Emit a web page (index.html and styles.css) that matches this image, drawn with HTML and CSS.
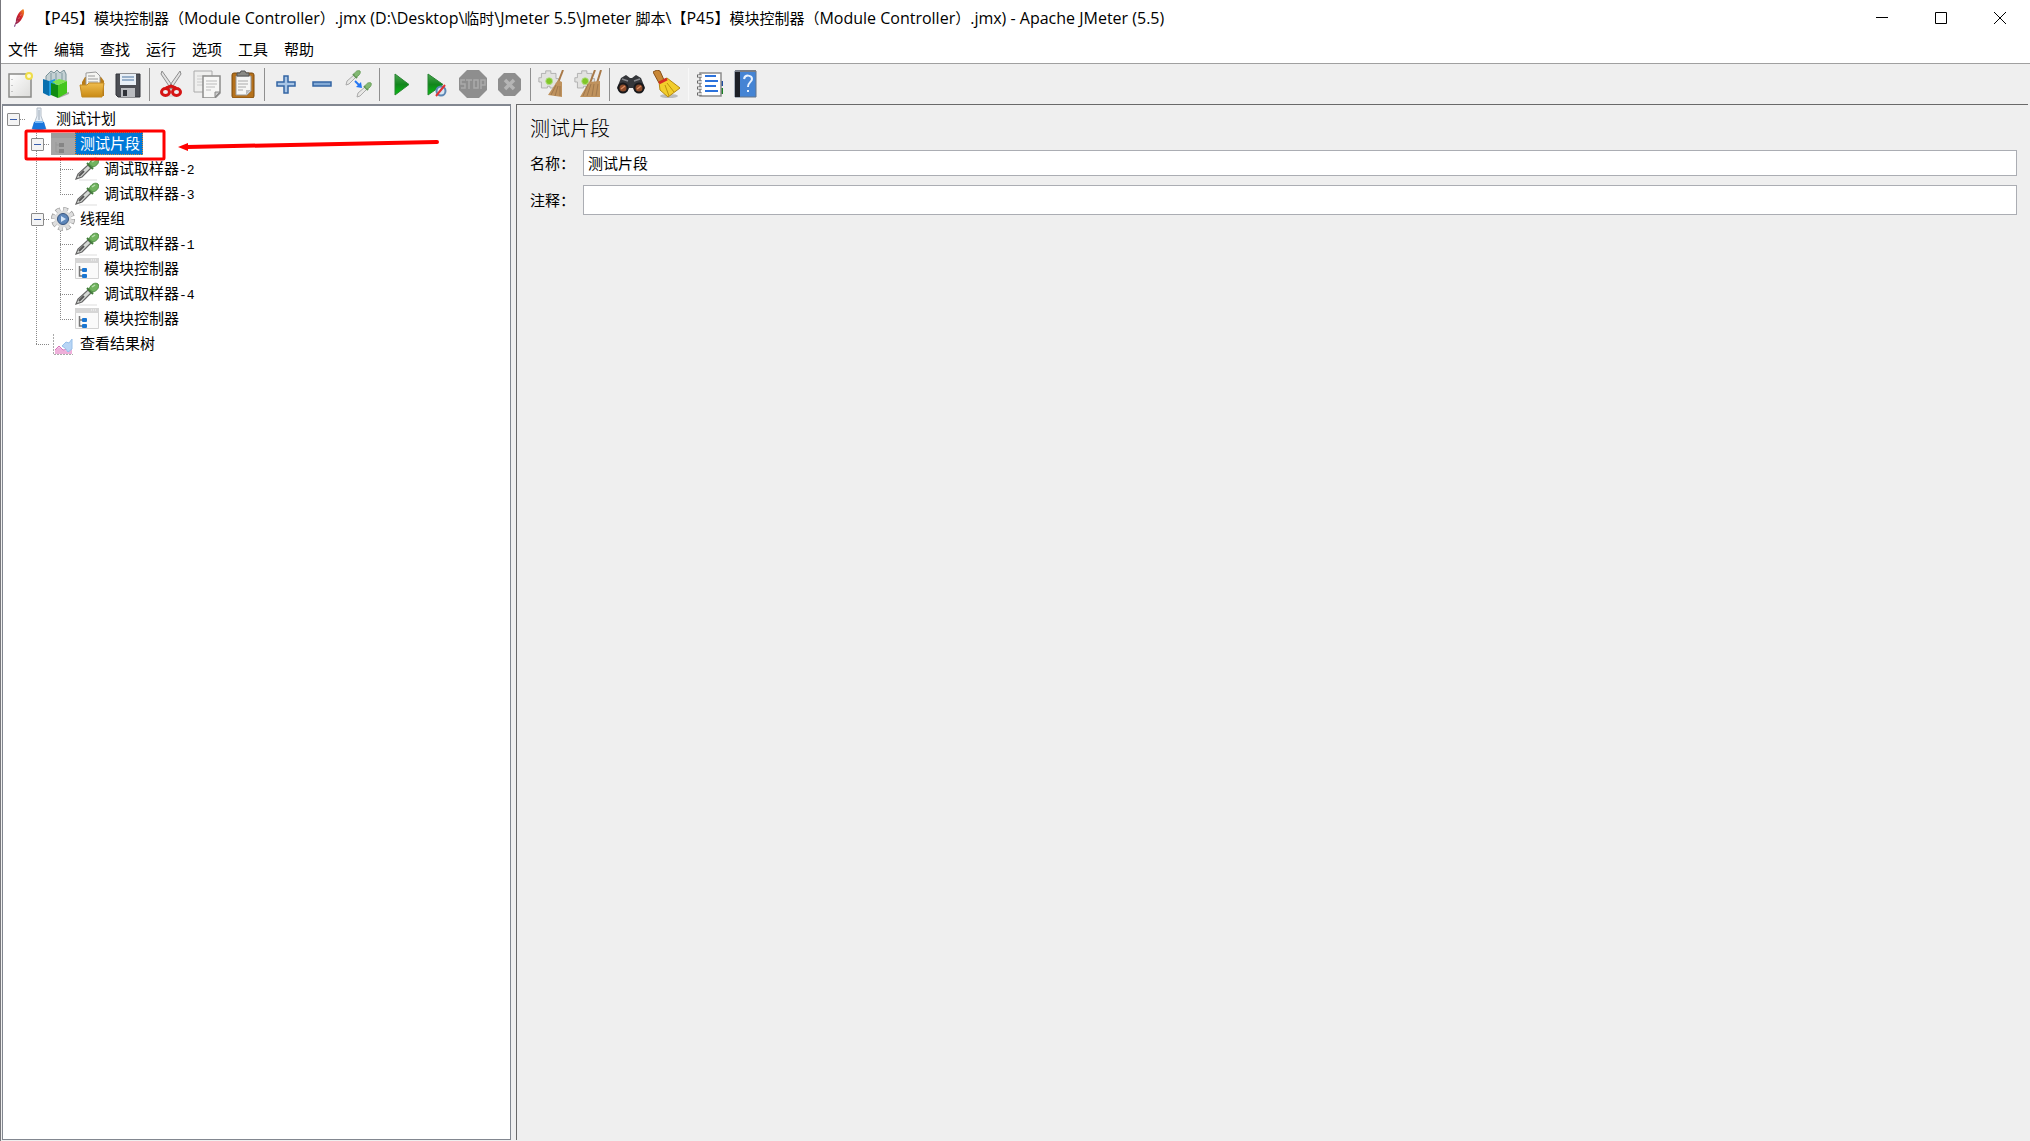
FILE: index.html
```html
<!DOCTYPE html>
<html lang="zh-CN">
<head>
<meta charset="utf-8">
<title>Apache JMeter (5.5)</title>
<link rel="stylesheet" href="styles.css">
</head>
<body>
<svg class="defs" width="0" height="0" aria-hidden="true">
  <defs>
    <linearGradient id="gGreen" x1="0" y1="0" x2="0" y2="1"><stop offset="0" stop-color="#4aa651"/><stop offset=".5" stop-color="#12861c"/><stop offset="1" stop-color="#06c010"/></linearGradient>
    <linearGradient id="gGold" x1="0" y1="0" x2="0" y2="1"><stop offset="0" stop-color="#f0bd4e"/><stop offset="1" stop-color="#c98a14"/></linearGradient>
    <linearGradient id="gFeather" x1="1" y1="0" x2="0" y2="1"><stop offset="0" stop-color="#f69923"/><stop offset=".4" stop-color="#d22128"/><stop offset=".8" stop-color="#8d2050"/><stop offset="1" stop-color="#5a2a82"/></linearGradient>
    <linearGradient id="gPaper" x1="0" y1="0" x2="1" y2="1"><stop offset="0" stop-color="#fff"/><stop offset="1" stop-color="#dcdcda"/></linearGradient>
    <symbol id="dropper" viewBox="0 0 24 24">
      <path d="M4 23h18" stroke="#ddd"/>
      <path d="M1 22l2-5L13 8l3 3L7 20z" fill="#d5d8d5" stroke="#666" stroke-width="1.2"/>
      <path d="M4 19l5-5" stroke="#555" stroke-width="2"/>
      <path d="M12 6l6 6" stroke="#407a38" stroke-width="2"/>
      <path d="M14 7c2-5 6-7 9-5 2 3-1 7-5 8z" fill="#71b45f" stroke="#4c8c40"/>
      <path d="M17 5l3-2" stroke="#b8deaf" stroke-width="1.5"/>
    </symbol>
    <symbol id="dropper-small" viewBox="0 0 16 16">
      <path d="M1 15l1-4 7-6 2 2-7 7z" fill="#e8e8e6" stroke="#aaa"/>
      <path d="M8 4l4 4" stroke="#5d9152" stroke-width="2"/>
      <path d="M9 5c1-4 4-5 6-4 1 2-1 5-4 6z" fill="#82b972" stroke="#6ba05c"/>
    </symbol>
    <symbol id="module" viewBox="0 0 24 24">
      <path d="M.5 1.500h23v20H.5z" fill="#fafafa" stroke="#d2d2d2"/>
      <path d="M0 1h24v5H0z" fill="#d6d6d6"/><path d="M16 3h6" stroke="#f8f8f8" stroke-dasharray="1 1"/>
      <path d="M4.500 9v10H8M4.500 13H8" fill="none" stroke="#777" stroke-width="1.500"/>
      <rect x="7" y="11" width="5" height="4" rx="1" fill="#1975d1"/><rect x="7" y="17" width="5" height="4" rx="1" fill="#1975d1"/>
    </symbol>
    <symbol id="gear" viewBox="0 0 24 24">
      <circle cx="12" cy="12" r="9.500" fill="none" stroke="#999" stroke-width="5" stroke-dasharray="4.500 2.960"/>
      <circle cx="12" cy="12" r="9.500" fill="none" stroke="#dedede" stroke-width="3.500" stroke-dasharray="3.500 3.960" stroke-dashoffset="-.5"/>
      <circle cx="12" cy="12" r="8.500" fill="#dcdcdc"/>
      <circle cx="12" cy="12" r="5.500" fill="#5d86ba" stroke="#38567f"/><path d="M10 9l5 3-5 3z" fill="#d4e5f8"/>
    </symbol>
    <symbol id="flask" viewBox="0 0 24 24">
      <path d="M10 1h4v8l5 13H5l5-13z" fill="#e5edf5" stroke="#b5bec8"/>
      <path d="M7 15h10l2 7q-7 2-14 0z" fill="#1875dc"/><path d="M8 15h8" stroke="#78b8f4" stroke-width="2"/><path d="M12 3v10" stroke="#9da8b4"/>
    </symbol>
    <symbol id="chart" viewBox="0 0 24 24">
      <path d="M2.500 2v20.500H22" fill="none" stroke="#aaa" stroke-dasharray="2 1"/>
      <path d="M4 22v-4l4-3 4 3 6 1 3-2v5z" fill="#eeb0da"/><path d="M4 18l4-4 4 4 8-1" fill="none" stroke="#d873bb"/>
      <path d="M11 14l4-4 3 1 3-4v10l-4 3-3-4z" fill="#b8d5f5" stroke="#98c0ea"/>
    </symbol>
    <symbol id="puzzle" viewBox="0 0 28 28">
      <path d="M4 4h5V1h6v3h6v6h3v5h-3v6h-7v-2h-3v2H4v-7H1v-5h3z" fill="#e2e2e0" stroke="#aaa"/>
      <circle cx="13" cy="13" r="4" fill="#80c728" stroke="#b7df8c"/>
    </symbol>
  </defs>
</svg>

<header class="titlebar">
  <svg class="feather" viewBox="0 0 14 22" aria-hidden="true"><path d="M11 1c2 2 1 7-1 10-2 4-5 6-7 7l-1 3-1-1 2-5c0-5 3-11 8-14z" fill="url(#gFeather)"/><path d="M2 19l8-14" stroke="#fff" stroke-opacity=".5" stroke-dasharray="2 2" stroke-width=".7"/></svg>
  <h1 class="title"><span class="cjk">【</span>P45<span class="cjk">】模块控制器（</span>Module Controller<span class="cjk">）</span>.jmx (D:\Desktop\<span class="cjk">临时</span>\Jmeter 5.5\Jmeter <span class="cjk">脚本</span>\<span class="cjk">【</span>P45<span class="cjk">】模块控制器（</span>Module Controller<span class="cjk">）</span>.jmx) - Apache JMeter (5.5)</h1>
  <div class="window-buttons">
    <button type="button" aria-label="最小化"><svg viewBox="0 0 12 12"><path d="M0 5.500h12"/></svg></button>
    <button type="button" aria-label="最大化"><svg viewBox="0 0 12 12"><path d="M.5.500h11v11H.5z"/></svg></button>
    <button type="button" aria-label="关闭"><svg viewBox="0 0 12 12"><path d="M0 0l12 12M12 0L0 12"/></svg></button>
  </div>
</header>

<nav class="menubar">
  <button type="button">文件</button><button type="button">编辑</button><button type="button">查找</button><button type="button">运行</button><button type="button">选项</button><button type="button">工具</button><button type="button">帮助</button>
</nav>

<div class="toolbar" role="toolbar">
  <button type="button" aria-label="新建"><svg viewBox="0 0 28 28"><path d="M3 4h22v23H3z" fill="url(#gPaper)" stroke="#8a8a88" stroke-width="1.500"/><path d="M6 9v14" stroke="#999" stroke-dasharray="1 5"/><circle cx="23" cy="6" r="3" fill="#fffbd0" stroke="#eedd4a" stroke-width="2"/></svg></button>
  <button type="button" aria-label="模板"><svg viewBox="0 0 28 28"><path d="M4 6l5-5 3 2 3-3 3 3 4-3 2 4v12H4z" fill="#c4d1d4" stroke="#7a9298"/><path d="M9 3v8M14 3v8M20 3v8" stroke="#7e999f"/><path d="M1 9l6 2v15l-6-3z" fill="#086fae"/><path d="M7 11l6-2v14l-6 3z" fill="#1d9bdf"/><path d="M15 25l12-3v2l-10 4z" fill="#aaa"/><path d="M9 13l7 2v13l-7-3z" fill="#108b12"/><path d="M16 15l9-4v12l-9 5z" fill="#43c61c"/><path d="M10 12l7-3 8 2-9 4z" fill="#7be24b"/></svg></button>
  <button type="button" aria-label="打开"><svg viewBox="0 0 28 28"><path d="M4 12l3-5h16l3 4v15H4z" fill="#b87b17"/><path d="M8 3l10-1 4 4v13H8z" fill="#f5f5f2" stroke="#999"/><path d="M10 6h7M10 9h10M10 12h10" stroke="#999"/><path d="M2 15h7l2-2h15l-2 14H4z" fill="url(#gGold)" stroke="#c28a23"/></svg></button>
  <button type="button" aria-label="保存"><svg viewBox="0 0 28 28"><path d="M2 4h24v23H4l-2-2z" fill="#4c4e54" stroke="#33353a"/><path d="M6 4h16v11H6z" fill="#e8eff6"/><path d="M8 7h12M8 10h12" stroke="#7f9dbd" stroke-width="1.500"/><path d="M7 18h14v9H7z" fill="#b9bbbf"/><path d="M9 20h4v6H9z" fill="#303238"/></svg></button>
  <hr>
  <button type="button" aria-label="剪切"><svg viewBox="0 0 28 28"><ellipse cx="14" cy="26" rx="9" ry="1" fill="#ddd"/><path d="M5 1l12 17-3 1L4 4zM23 1L11 18l3 1L24 4z" fill="#e3e3e3" stroke="#8d8d8d"/><ellipse cx="8.500" cy="22" rx="4" ry="3.500" fill="none" stroke="#d51414" stroke-width="3"/><ellipse cx="19.500" cy="22" rx="4" ry="3.500" fill="none" stroke="#d51414" stroke-width="3"/><path d="M9 18l5-2 5 2" fill="none" stroke="#d51414" stroke-width="3"/></svg></button>
  <button type="button" aria-label="复制"><svg viewBox="0 0 28 28"><path d="M1 1h18v21H1z" fill="#efefee" stroke="#aaa"/><path d="M4 6h9M4 9h7M4 12h7M4 15h7" stroke="#ccc"/><path d="M10 6h17v17l-5 5H10z" fill="#f7f7f6" stroke="#8d8d8c" stroke-width="1.500"/><path d="M13 11h11M13 14h11M13 17h9M13 20h5" stroke="#bbb"/><path d="M27 22h-5v5z" fill="#ccc" stroke="#888"/></svg></button>
  <button type="button" aria-label="粘贴"><svg viewBox="0 0 28 28"><rect x="3" y="3" width="22" height="25" rx="2" fill="#b5711b" stroke="#7d4b0c"/><path d="M7 6h15v15l-4 4H7z" fill="#f6f6f4" stroke="#999"/><path d="M9 11h10M9 14h10M9 17h8M9 20h5" stroke="#aaa"/><path d="M22 20h-5v5z" fill="#bbb"/><path d="M8 6V3h3l1-2h4l1 2h3v3z" fill="#8a8a84" stroke="#555"/></svg></button>
  <hr>
  <button type="button" aria-label="展开"><svg viewBox="0 0 28 28"><path d="M12 6h4v6h7v4h-7v7h-4v-7H5v-4h7z" fill="#a9c6e6" stroke="#3465a4" stroke-width="1.500"/></svg></button>
  <button type="button" aria-label="折叠"><svg viewBox="0 0 28 28"><path d="M5 12h18v4H5z" fill="#83aad6" stroke="#3465a4" stroke-width="1.500"/></svg></button>
  <button type="button" aria-label="切换"><svg viewBox="0 0 28 28"><use href="#dropper-small" x="1" y="0" width="16" height="16"/><use href="#dropper-small" x="12" y="12" width="16" height="16"/><path d="M11 11l4 4" stroke="#2476f3" stroke-width="2"/><path d="M18 18l-6-1 5-5z" fill="#2476f3"/></svg></button>
  <hr>
  <button type="button" aria-label="启动"><svg viewBox="0 0 28 28"><path d="M8 4l14 10.500L8 25z" fill="url(#gGreen)" stroke="#298432"/></svg></button>
  <button type="button" aria-label="无间隔启动"><svg viewBox="0 0 28 28"><path d="M5 4l15 10.500L5 25z" fill="url(#gGreen)" stroke="#298432"/><circle cx="18" cy="21" r="4.500" fill="#d8e6f3" stroke="#5d87b4" stroke-width="2"/><path d="M13 26l9-11" stroke="#dd3434" stroke-width="2"/></svg></button>
  <button type="button" aria-label="停止" disabled><svg viewBox="0 0 28 28"><path d="M8 0h12l8 8v12l-8 8H8l-8-8V8z" fill="#8e8e8e"/><path d="M6 10H2v4h4v4H2M7 10h6M10 10v9M15 10h4v8h-4zM22 19v-9h4v5h-4" fill="none" stroke="#aaa" stroke-width="1.500"/></svg></button>
  <button type="button" aria-label="关闭线程" disabled><svg viewBox="0 0 28 28"><path d="M9 3h11l6 6v11l-6 6H9l-6-6V9z" fill="#8e8e8e"/><path d="M10 10l9 9M19 10l-9 9" stroke="#b5b5b5" stroke-width="3.500"/></svg></button>
  <hr>
  <button type="button" aria-label="清除"><svg viewBox="0 0 28 28"><use href="#puzzle" width="24" height="24"/><path d="M25 0l-5 13" stroke="#a87948" stroke-width="2"/><path d="M20 10l4 2v15l-14-2z" fill="#bf925d"/><path d="M18 15l-5 10M20 16l-3 10M22 16v10" stroke="#a0784c"/></svg></button>
  <button type="button" aria-label="清除全部"><svg viewBox="0 0 28 28"><use href="#puzzle" width="24" height="24"/><path d="M21 0l-5 13M27 0l-4 13" stroke="#a87948" stroke-width="2"/><path d="M15 12l11-1v16H6z" fill="#bf925d"/><path d="M14 14L9 26M17 14l-4 12M20 14l-2 12M24 14l-2 12" stroke="#a0784c"/></svg></button>
  <hr>
  <button type="button" aria-label="查找"><svg viewBox="0 0 28 28"><path d="M4 8l5-3 4 3h2l4-3 5 3 4 10-3 4h-7l-2-4h-4l-2 4H3l-3-4z" fill="#34363a"/><path d="M5 9l6 2M23 9l-6 2" stroke="#85878c" stroke-width="1.500"/><circle cx="6" cy="18" r="4.500" fill="#8b4b2a" stroke="#18191c" stroke-width="2"/><circle cx="22" cy="18" r="4.500" fill="#8b4b2a" stroke="#18191c" stroke-width="2"/><path d="M4 19l4-3M20 19l4-3" stroke="#d98b60" stroke-width="1.500"/></svg></button>
  <button type="button" aria-label="重置查找"><svg viewBox="0 0 28 28"><ellipse cx="16" cy="26" rx="9" ry="2" fill="#bbb"/><path d="M0 2l4-2 3 1 4 9-5 3z" fill="#c88736" stroke="#885018"/><path d="M6 12l8-4 13 10-12 9-8-7z" fill="#f2cd2c" stroke="#b68910"/><path d="M12 15l4 11M14 13l7 9" stroke="#bd920b"/><path d="M6 13l8-4" stroke="#d52b22" stroke-width="3"/></svg></button>
  <hr class="blank">
  <button type="button" aria-label="函数助手"><svg viewBox="0 0 28 28"><path d="M24 11h3v5h-3z" fill="#1f4da0"/><path d="M24 18h3v6h-3z" fill="#188022"/><path d="M4 3h21v23H4z" fill="#fff" stroke="#8c8c8c" stroke-width="1.500"/><path d="M9 6h11M9 11h13M9 16h11M9 21h13" stroke="#2b72dc" stroke-width="2"/><path d="M1 6h5M1 12h5M1 18h5M1 24h5" stroke="#666" stroke-width="3"/><path d="M2 6h4M2 12h4M2 18h4M2 24h4" stroke="#fff" stroke-width="1.500"/></svg></button>
  <button type="button" aria-label="帮助"><svg viewBox="0 0 28 28"><path d="M3 1h21v26H3z" fill="#4584d4" stroke="#64748a"/><path d="M3 1h5v26H3z" fill="#1c1f26"/><path d="M3 1h21" stroke="#777d87" stroke-width="2"/><path d="M12 9c1-5 8-4 8 0 0 3-4 3-4 8M16 20v2" fill="none" stroke="#e8f2ff" stroke-width="2"/></svg></button>
</div>

<main class="workspace">
  <aside class="tree-pane">
    <ul class="tree">
      <li>
        <div class="row"><button type="button" class="handle" aria-label="折叠测试计划"></button><svg class="node"><use href="#flask"/></svg><span class="label">测试计划</span></div>
        <ul>
          <li>
            <div class="row selected"><button type="button" class="handle" aria-label="折叠测试片段"></button><svg class="node" viewBox="0 0 24 24"><path d="M0 1h24v22H0z" fill="#a6a6a6"/><path d="M0 1h24v5H0z" fill="#9c9c9c"/><path d="M5 10v10h4M5 13h4" fill="none" stroke="#999"/><path d="M8 11h5v4H8zM8 17h5v4H8z" fill="#858585"/></svg><span class="label">测试片段</span>
              <svg class="callout" viewBox="0 0 420 34" aria-hidden="true"><rect x="2" y="2" width="138" height="28" rx="1" fill="none" stroke="#f00" stroke-width="3"/><path d="M163 18L413 13" stroke="#f00" stroke-width="4" stroke-linecap="round"/><path d="M154 18l10-4v8z" fill="#f00"/></svg>
            </div>
            <ul>
              <li><div class="row"><span class="branch"></span><svg class="node"><use href="#dropper"/></svg><span class="label">调试取样器<span class="num">-2</span></span></div></li>
              <li><div class="row"><span class="branch"></span><svg class="node"><use href="#dropper"/></svg><span class="label">调试取样器<span class="num">-3</span></span></div></li>
            </ul>
          </li>
          <li>
            <div class="row"><button type="button" class="handle" aria-label="折叠线程组"></button><svg class="node"><use href="#gear"/></svg><span class="label">线程组</span></div>
            <ul>
              <li><div class="row"><span class="branch"></span><svg class="node"><use href="#dropper"/></svg><span class="label">调试取样器<span class="num">-1</span></span></div></li>
              <li><div class="row"><span class="branch"></span><svg class="node"><use href="#module"/></svg><span class="label">模块控制器</span></div></li>
              <li><div class="row"><span class="branch"></span><svg class="node"><use href="#dropper"/></svg><span class="label">调试取样器<span class="num">-4</span></span></div></li>
              <li><div class="row"><span class="branch"></span><svg class="node"><use href="#module"/></svg><span class="label">模块控制器</span></div></li>
            </ul>
          </li>
          <li><div class="row"><span class="branch"></span><svg class="node"><use href="#chart"/></svg><span class="label">查看结果树</span></div></li>
        </ul>
      </li>
    </ul>
  </aside>
  <section class="editor">
    <h2>测试片段</h2>
    <form class="fields">
      <label for="name">名称：</label><input id="name" type="text" value="测试片段">
      <label for="comment">注释：</label><input id="comment" class="tall" type="text">
    </form>
  </section>
</main>
</body>
</html>
```
FILE: styles.css
```css
* { box-sizing: border-box; }

body {
  margin: 0;
  min-height: 100vh;
  display: flex;
  flex-direction: column;
  border-left: 1px solid #77777c;
  background: #fff;
  color: #000;
  font: 15px/20px "Noto Sans", "Noto Sans CJK SC", sans-serif;
}

button { margin: 0; padding: 0; border: 0; background: none; color: inherit; font: inherit; }
ul { margin: 0; padding: 0; list-style: none; }
.defs { position: absolute; }

/* Title bar */
.titlebar { display: flex; align-items: center; height: 36px; padding: 0 1px 0 12px; }
.feather { width: 13px; height: 20px; }
.title { flex: 1; margin: 0 0 0 10px; font: 400 16px/20px "Open Sans", "Noto Sans CJK SC", sans-serif; white-space: nowrap; overflow: hidden; }
.cjk { font-size: 15px; }
.window-buttons { display: flex; }
.window-buttons button { display: grid; place-items: center; width: 59px; height: 36px; }
.window-buttons svg { width: 12px; height: 12px; fill: none; stroke: #000; }

/* Menu */
.menubar { display: flex; gap: 16px; height: 28px; padding: 0 7px; border-bottom: 1px solid #a0a0a0; }
.menubar button { height: 26px; line-height: 26px; }

/* Toolbar */
.toolbar { display: flex; align-items: center; height: 40px; padding-left: 1px; background: #efefef; }
.toolbar button { display: grid; place-items: center; width: 36px; height: 40px; }
.toolbar svg { width: 28px; height: 28px; fill: none; }
.toolbar hr { width: 1px; height: 33px; margin: 0 3px; border: 0; background: #8f8f8f; }
.toolbar .blank { background: #f8f8f8; }

/* Split view */
.workspace { flex: 1; display: grid; grid-template-columns: 509px 1fr; gap: 5px; padding: 0 2px 1px 1px; background: #efefef; }
.tree-pane { border: 2px solid #828790; border-width: 2px 1px 1px; padding: 0 0 0 4px; background: #fff; }
.tree-pane, .fields, .editor h2 { font-family: "Noto Sans CJK SC", sans-serif; }

.tree ul {
  margin-left: 24px;
  background: repeating-linear-gradient(#888 0 1px, transparent 1px 2px) 5px 0 / 1px calc(100% - 12px) no-repeat;
}
.row { display: flex; align-items: center; height: 25px; position: relative; }
.handle, .branch { flex: none; width: 20px; height: 12px; background: repeating-linear-gradient(90deg, #888 0 1px, transparent 1px 2px) 5px 6px / 13px 1px no-repeat; }
.handle::before {
  content: "";
  display: block;
  width: 11px;
  height: 11px;
  border: 1px solid #8a8a8a;
  border-radius: 1px;
  background: linear-gradient(#3a5fae, #3a5fae) center / 7px 1px no-repeat, #f4f4f4;
}
.node { flex: none; width: 24px; height: 24px; fill: none; }
.label { height: 23px; padding: 0 4px; border: 1px solid transparent; line-height: 19px; white-space: nowrap; }
.num { font: 13px/19px "Liberation Mono", monospace; }
.selected .label { padding-right: 2px; background: #0078d7; border: 1px dotted #e58a35; color: #fff; }

/* Red marker laid over the selected node */
.callout { position: absolute; left: -7px; top: -2px; width: 420px; height: 34px; z-index: 1; pointer-events: none; }

/* Editor */
.editor { padding: 9px 11px 0 13px; border-top: 1px solid #696969; border-left: 1px solid #696969; }
.editor h2 { margin: 0; font-size: 20px; line-height: 28px; font-weight: 300; }
.fields { display: grid; grid-template-columns: 44px 1fr; gap: 9px; align-items: center; margin-top: 8px; }
.fields label { white-space: nowrap; }
.fields input { width: 100%; height: 26px; padding: 0 4px 2px; border: 1px solid #abadb3; border-radius: 0; background: #fff; color: #000; font: inherit; outline: 0; }
.fields .tall { height: 30px; }
```
